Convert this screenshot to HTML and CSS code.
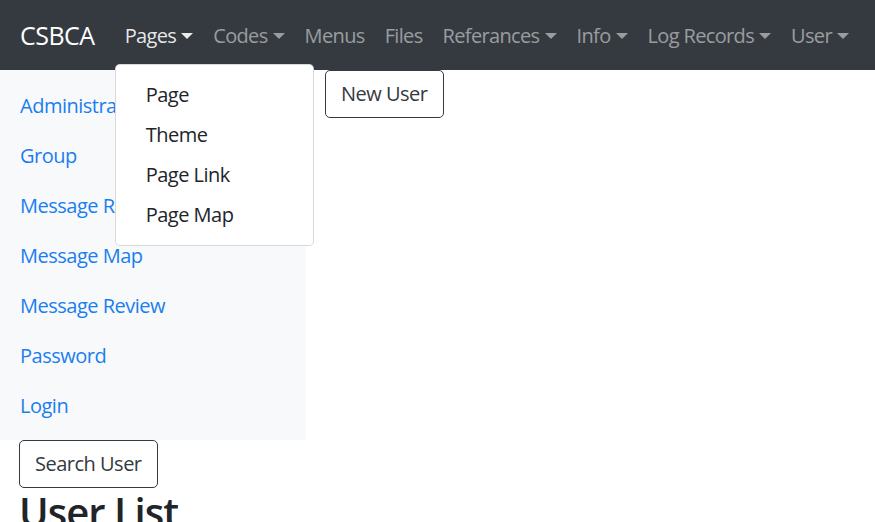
FILE: index.html
```html
<!DOCTYPE html>
<html lang="en">
<head>
<meta charset="utf-8">
<title>CSBCA</title>
<link rel="stylesheet" href="styles.css">
</head>
<body>
<nav class="navbar">
  <a class="brand" href="#">CSBCA</a>
  <ul class="nav">
    <li class="nav-item dropdown">
      <a class="nav-link active caret" href="#">Pages</a>
      <div class="dropdown-menu">
        <a class="dropdown-item" href="#">Page</a>
        <a class="dropdown-item" href="#">Theme</a>
        <a class="dropdown-item" href="#">Page Link</a>
        <a class="dropdown-item" href="#">Page Map</a>
      </div>
    </li>
    <li class="nav-item"><a class="nav-link caret" href="#">Codes</a></li>
    <li class="nav-item"><a class="nav-link" href="#">Menus</a></li>
    <li class="nav-item"><a class="nav-link" href="#">Files</a></li>
    <li class="nav-item"><a class="nav-link caret" href="#">Referances</a></li>
    <li class="nav-item"><a class="nav-link caret" href="#">Info</a></li>
    <li class="nav-item"><a class="nav-link caret" href="#">Log Records</a></li>
    <li class="nav-item"><a class="nav-link caret" href="#">User</a></li>
  </ul>
</nav>
<div class="row">
  <aside class="sidebar">
    <a class="side-link" href="#">Administration</a>
    <a class="side-link" href="#">Group</a>
    <a class="side-link" href="#">Message Resource</a>
    <a class="side-link" href="#">Message Map</a>
    <a class="side-link" href="#">Message Review</a>
    <a class="side-link" href="#">Password</a>
    <a class="side-link" href="#">Login</a>
  </aside>
  <main class="main">
    <button class="btn">New User</button>
  </main>
</div>
<div class="content">
  <button class="btn">Search User</button>
  <h1 class="title">User List</h1>
</div>
</body>
</html>
```
FILE: styles.css
```css
* { box-sizing: border-box; }
html, body { margin: 0; padding: 0; }
body {
  font-family: "Open Sans", "Noto Sans", sans-serif;
  font-size: 20px;
  line-height: 30px;
  letter-spacing: -0.5px;
  color: #212529;
  background: #fff;
  overflow: hidden;
  height: 522px;
}
a { text-decoration: none; }
.navbar {
  height: 70px;
  background: #343a40;
  display: flex;
  align-items: center;
  padding: 0 20px;
}
.brand {
  color: #fff;
  font-size: 25px;
  line-height: 38px;
  margin-right: 20px;
  white-space: nowrap;
}
.nav {
  list-style: none;
  margin: 0;
  padding: 0;
  display: flex;
  flex-wrap: nowrap;
}
.nav-item { position: relative; }
.nav-link {
  display: block;
  padding: 11px 10px 9px;
  color: rgba(255,255,255,.5);
  white-space: nowrap;
  letter-spacing: -0.65px;
}
.nav-link.active { color: rgba(255,255,255,.9); }
.caret::after {
  content: "";
  display: inline-block;
  margin-left: 5px;
  vertical-align: 4px;
  border-top: 6px solid;
  border-left: 6px solid transparent;
  border-right: 6px solid transparent;
}
.dropdown-menu {
  position: absolute;
  top: 54px;
  left: 0;
  z-index: 10;
  width: 199px;
  padding: 10px 0;
  background: #fff;
  border: 1px solid rgba(0,0,0,.15);
  border-radius: 5px;
  display: flex;
  flex-direction: column;
  letter-spacing: -0.5px;
}
.dropdown-item {
  padding: 5px 30px;
  color: #212529;
  white-space: nowrap;
}
.row { display: flex; }
.sidebar {
  width: 306px;
  background: #f8f9fa;
  padding: 10px 0;
  display: flex;
  flex-direction: column;
}
.side-link {
  padding: 11px 20px 9px;
  color: #1a7ef0;
  white-space: nowrap;
}
.main { padding-left: 19px; }
.btn {
  font-family: inherit;
  font-size: 20px;
  letter-spacing: -0.5px;
  line-height: 30px;
  padding: 8px 15px;
  color: #343a40;
  background: transparent;
  border: 1px solid #343a40;
  border-radius: 5px;
}
.content { padding-left: 19px; }
.title {
  margin: 0;
  font-size: 40px;
  font-weight: 600;
  line-height: 48px;
  letter-spacing: -1px;
  color: #212529;
}
```
